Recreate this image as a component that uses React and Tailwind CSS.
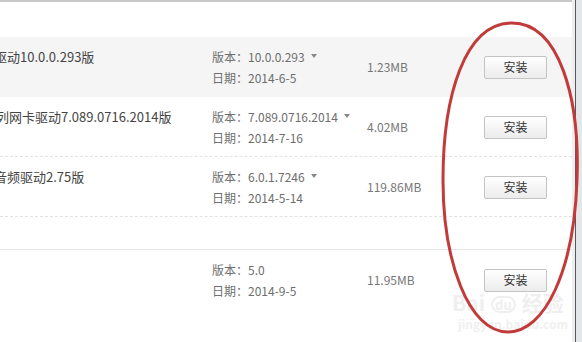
import React from "react";

const rows = [
  { title: "驱动10.0.0.293版", cut: "ml-[-6px]", version: "10.0.0.293", date: "2014-6-5", size: "1.23MB", bg: "bg-[#f5f5f5]", border: "" },
  { title: "列网卡驱动7.089.0716.2014版", cut: "ml-[-4px]", version: "7.089.0716.2014", date: "2014-7-16", size: "4.02MB", bg: "bg-white", border: "border-b border-dashed border-[#e2e2e2]" },
  { title: "音频驱动2.75版", cut: "ml-[-6px]", version: "6.0.1.7246", date: "2014-5-14", size: "119.86MB", bg: "bg-white", border: "border-b border-dashed border-[#e2e2e2]" },
];

const Caret = () => (
  <svg width="6" height="4" viewBox="0 0 6 4" className="ml-[6px] mb-[2px] inline-block">
    <path d="M0 0 L6 0 L3 4 Z" fill="#888" />
  </svg>
);

const InstallButton = () => (
  <button className="w-[63px] h-[23px] border border-[#c4c4c4] rounded-[2px] bg-gradient-to-b from-white to-[#ececec] text-[12px] text-[#333] leading-none">
    安装
  </button>
);

const Row = ({ row, showCaret = true }) => (
  <div className={`flex h-[60px] pt-[9px] ${row.bg} ${row.border}`}>
    <div className="w-[212px] overflow-hidden">
      <div className={`${row.cut} h-[21px] leading-[21px] text-[13px] text-[#444] whitespace-nowrap`}>
        {row.title}
      </div>
    </div>
    <div className="w-[155px] text-[12px] text-[#6e6e6e]">
      <div className="h-[21px] leading-[21px] whitespace-nowrap flex items-center">
        版本：{row.version}
        {showCaret && <Caret />}
      </div>
      <div className="h-[21px] leading-[21px] whitespace-nowrap">日期：{row.date}</div>
    </div>
    <div className="w-[117px] h-[42px] flex items-center text-[12px] text-[#777]">{row.size}</div>
    <div className="h-[42px] flex items-center">
      <InstallButton />
    </div>
  </div>
);

export default function App() {
  return (
    <div
      className="relative w-[582px] h-[342px] overflow-hidden bg-white flex"
      style={{ fontFamily: '"Microsoft YaHei", "Noto Sans CJK SC", sans-serif' }}
    >
      <div className="w-[572px] flex flex-col">
        <div className="h-[2px] bg-[#c8c8c8]" />
        <div className="h-[35px]" />
        {rows.map((r) => (
          <Row key={r.title} row={r} />
        ))}
        <div className="h-[33px] border-b border-[#e6e6e6]" />
        <Row
          row={{ title: "", cut: "", version: "5.0", date: "2014-9-5", size: "11.95MB", bg: "bg-white", border: "" }}
          showCaret={false}
        />
      </div>
      <div className="w-[3px] bg-[#eeeeee]" />
      <div className="w-[1px] bg-[#55595e]" />
      <div className="flex-1 bg-[#e4e7ea]" />

      {/* baidu watermark */}
      <div className="absolute left-[452px] top-[292px] flex items-end gap-[6px] text-[#efefef] font-bold text-[21px] leading-none">
        <span>Bai</span>
        <span className="text-[13px] border-2 border-[#efefef] rounded-full px-[2px]">du</span>
        <span>经验</span>
      </div>
      <div className="absolute left-[458px] top-[318px] text-[12px] text-[#f0f0f0] font-bold leading-none">
        jingyan.baidu.com
      </div>

      {/* red hand-drawn ellipse */}
      <svg className="absolute left-0 top-0 pointer-events-none" width="582" height="342" viewBox="0 0 582 342">
        <path
          d="M511 23 C 560 22, 580 100, 577 180 C 574 270, 545 332, 508 332 C 468 332, 443 260, 443 180 C 443 95, 465 24, 511 23 Z"
          fill="none"
          stroke="#c23b3b"
          strokeWidth="3"
        />
      </svg>
    </div>
  );
}
